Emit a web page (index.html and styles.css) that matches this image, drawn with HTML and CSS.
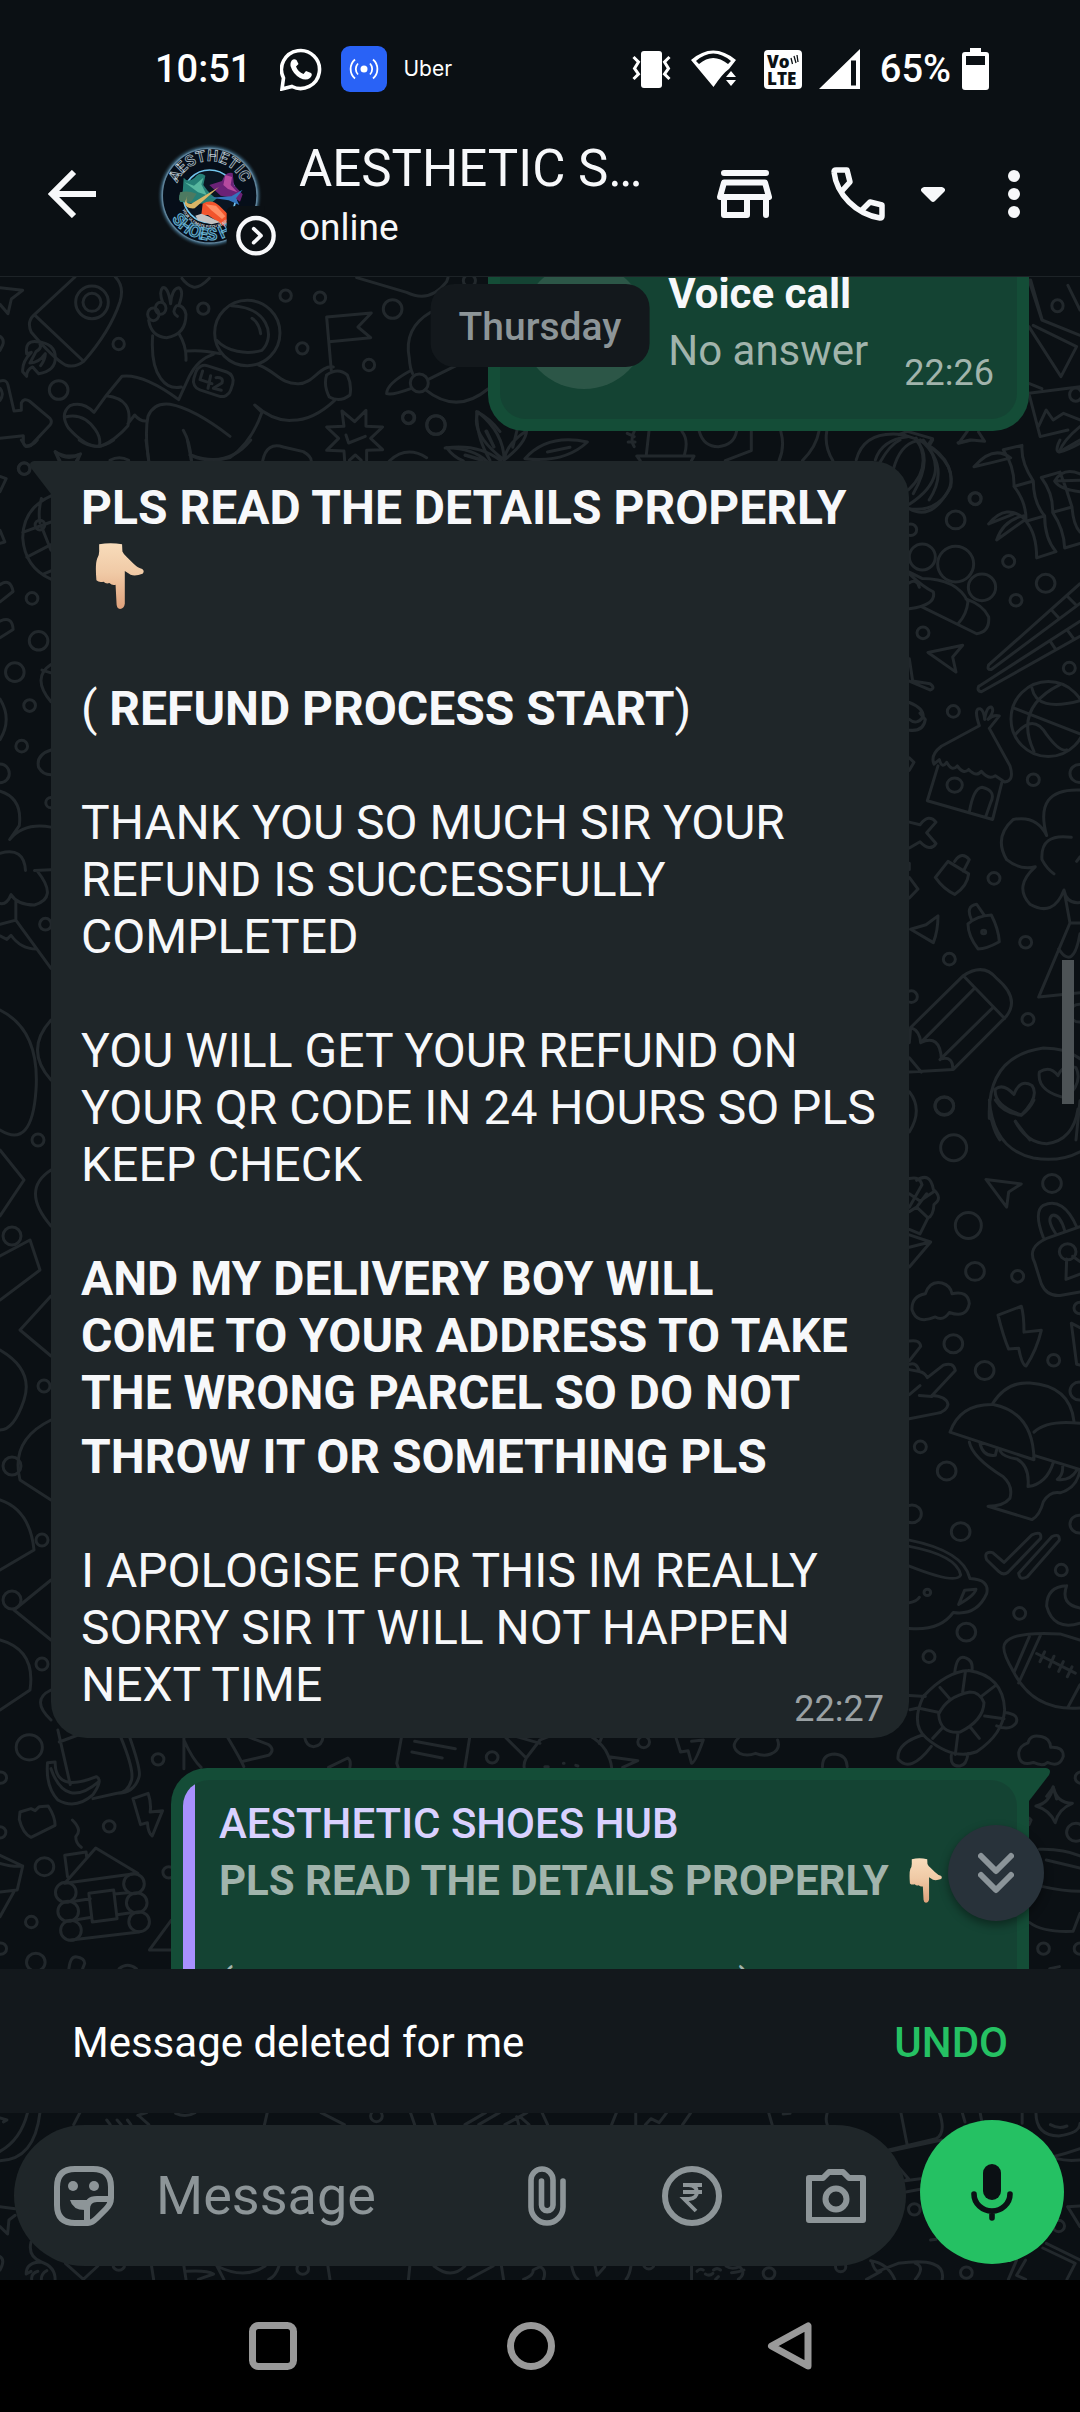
FILE: index.html
```html
<!DOCTYPE html>
<html lang="en">
<head>
<meta charset="utf-8">
<meta name="viewport" content="width=device-width, initial-scale=1">
<title>AESTHETIC SHOES HUB</title>
<link rel="stylesheet" href="styles.css">
</head>
<body>
<svg class="defs" aria-hidden="true">
  <defs>
    <linearGradient id="skin" x1="0" y1="0" x2="0" y2="1">
      <stop offset="0" stop-color="#f8dcbb"/><stop offset=".45" stop-color="#f0caa6"/><stop offset="1" stop-color="#dfa17b"/>
    </linearGradient>
    <symbol id="point-down" viewBox="0 0 143 193">
      <path fill="url(#skin)" d="M12 4Q45-3 79 4L80 25Q84 34 92 40L112 60Q126 74 138 76Q146 82 139 90Q118 98 104 93L87 82V178Q85 193 73 193Q64 192 63 180L60 122Q50 125 42 117Q32 121 25 113Q12 117 4 109Q0 62 6 46Q13 36 12 20Z"/>
    </symbol>
  </defs>
</svg>

<div class="statusbar">
  <div class="status-left">
    <span class="clock">10:51</span>
    <svg class="s-wa" width="42" height="43" viewBox="0 0 42 43" aria-hidden="true"><path d="M3.500 30A19 19 0 1 1 12 38.500L2 41Z" fill="none" stroke="#fff" stroke-width="3.600"/><path fill="#fff" d="M13 11.500Q10 13 10.500 18Q13 26 20 30Q26 33 30 30Q33 27 31 25L26 23L23.500 26Q18 24 16 18.500L18.500 16L16.500 12Q15 11 13 11.500Z"/></svg>
    <svg class="s-hot" width="46" height="46" viewBox="0 0 46 46" aria-hidden="true"><rect width="46" height="46" rx="9" fill="#2962f6"/><circle cx="23" cy="23" r="3.500" fill="#fff"/><g fill="none" stroke="#fff" stroke-width="1.800"><path d="M17 17.500A8 8 0 0 0 17 28.500M29 17.500A8 8 0 0 1 29 28.500M14 13.500A12.500 12.500 0 0 0 14 32.500M32 13.500A12.500 12.500 0 0 1 32 32.500"/></g></svg>
    <span class="uber">Uber</span>
  </div>
  <div class="status-right">
    <svg width="39" height="38" viewBox="0 0 39 38" aria-hidden="true"><rect x="9" y="1" width="21" height="37" rx="3" fill="#fff"/><path d="M1.500 7l5 5-4 6.500 4 5.500-5 5M37.500 7l-5 5 4 6.500-4 5.500 5 5" fill="none" stroke="#fff" stroke-width="3"/></svg>
    <svg class="s-wifi" width="46" height="40" viewBox="0 0 46 40" aria-hidden="true"><path fill="#fff" fill-rule="evenodd" d="M0 11Q22-8 45 11L38 20Q32 24 22.500 38ZM5 12L8 15Q22 3 37 15L40 12Q22-3 5 12Z"/><path fill="#fff" d="M35 28l5-6 5 6zM35 31h10l-5 6z"/></svg>
    <svg class="s-volte" width="38" height="39" viewBox="0 0 38 39" aria-hidden="true"><rect width="38" height="39" rx="4" fill="#fff"/><text x="3" y="18" class="volte">Vo</text><text x="3" y="35" class="volte">LTE</text><path d="M27 8l1.500 6M30 6l2 7M33 5l1 7" stroke="#0b1014" stroke-width="1.300"/></svg>
    <svg class="s-sig" width="41" height="40" viewBox="0 0 41 40" aria-hidden="true"><path fill="#fff" fill-rule="evenodd" d="M0 40L41 0V40ZM32 11.500V36.500H37V11.500Z"/></svg>
    <span class="battery-text">65%</span>
    <svg width="27" height="42" viewBox="0 0 27 42" aria-hidden="true"><path fill="#fff" fill-rule="evenodd" d="M8 0H19V4H24Q27 4 27 7V39Q27 42 24 42H3Q0 42 0 39V7Q0 4 3 4H8ZM4 8V17H23V8Z"/></svg>
  </div>
</div>

<header class="appbar">
  <button class="icon-btn back" aria-label="Back"><svg width="48" height="48" viewBox="0 0 48 48"><path d="M26 2L4 24l22 22M4 24h44" fill="none" stroke="#f7f8fa" stroke-width="6"/></svg></button>
  <svg class="avatar" width="130" height="130" viewBox="0 0 390 390" role="img" aria-label="Profile photo">
    <defs>
      <radialGradient id="glow"><stop offset=".84" stop-color="#7fb6d6"/><stop offset=".92" stop-color="#34566b"/><stop offset="1" stop-color="#0b1014" stop-opacity="0"/></radialGradient>
      <path id="arc-top" d="M81 182A104 104 0 0 1 289 182"/>
      <path id="arc-mid" d="M96 190A89 89 0 0 0 274 190"/>
      <path id="arc-bottom" d="M52 182A133 133 0 0 0 318 182"/>
    </defs>
    <circle cx="185" cy="182" r="158" fill="url(#glow)"/>
    <circle cx="185" cy="182" r="142" fill="#060e19" stroke="#5f8299" stroke-width="4"/>
    <circle cx="185" cy="184" r="79" fill="#0a1522" stroke="#73c6ee" stroke-width="5"/>
    <path fill="#257f76" d="M107 128Q120 145 140 128Q155 108 172 122L166 150Q190 185 207 190L190 204Q140 210 96 200Q88 178 104 172Z"/>
    <path fill="#57b79f" d="M110 142L138 152L166 128L160 148L176 180L150 172Z"/>
    <path fill="#4d7a61" d="M96 172Q120 166 146 176L130 200Q100 202 93 194Z"/>
    <path fill="#6b2277" d="M184 150L222 138Q232 108 254 114L258 150L284 178L276 200L262 190L218 182Z"/>
    <path fill="#b54a9f" d="M232 120L252 126L248 150L268 172L240 162L226 150Z"/>
    <path fill="#3474bd" d="M186 188L250 184L284 164L264 190L274 210L242 196L216 192Z"/>
    <path fill="#d9b566" d="M118 182Q108 208 130 206L213 156L140 220Q112 222 110 204Z"/>
    <path fill="#f2542c" d="M164 206Q190 190 214 212L246 244L260 268L232 276L180 240L160 240Z"/>
    <path fill="#ff8d64" d="M172 208L204 212L232 244L222 252L190 226Z"/>
    <path fill="#c4c2c1" d="M142 242L160 236L180 244L216 262L190 268L150 256Z"/>
    <text class="ring-top"><textPath href="#arc-top" startOffset="50%">AESTHETIC</textPath></text>
    <text class="ring-mid"><textPath href="#arc-mid" startOffset="50%">YOUR ULTIMATE PITCH READY SHOES</textPath></text>
    <text class="ring-bottom"><textPath href="#arc-bottom" startOffset="50%">SHOES HUB</textPath></text>
    <path fill="#0b1014" d="M236 232Q236 213 262 213H350V350H236Z"/>
    <circle cx="324" cy="302" r="53" fill="#0b1014" stroke="#f7f8fa" stroke-width="13"/>
    <path d="M317 281l22 21-22 21" fill="none" stroke="#f7f8fa" stroke-width="11" stroke-linecap="round" stroke-linejoin="round"/>
  </svg>
  <div class="contact">
    <h1 class="contact-name">AESTHETIC SHOES HUB</h1>
    <p class="contact-state">online</p>
  </div>
  <div class="actions">
    <button class="icon-btn" aria-label="Catalogue"><svg width="55" height="48" viewBox="0 0 55 48"><g fill="none" stroke="#f7f8fa" stroke-width="6" stroke-linecap="round" stroke-linejoin="round"><path d="M7 3H49M7 12.500H48L52 27H3ZM7 27V45H30V27M49 27V45"/></g></svg></button>
    <button class="icon-btn call" aria-label="Voice call"><svg width="54" height="54" viewBox="0 0 54 54"><path d="M3 5Q3 3 5 3H16L19 15L10 25M3 5Q5 22 18 35T49 51Q51 51 51 49V38L39 35L31 43" fill="none" stroke="#f7f8fa" stroke-width="5.500" stroke-linejoin="round"/></svg></button>
    <button class="icon-btn caret" aria-label="Call options"><svg width="24" height="15" viewBox="0 0 24 15"><path fill="#f7f8fa" d="M3 0H21Q26 2 23 5L14 14Q12 16 10 14L1 5Q-2 2 3 0Z"/></svg></button>
    <button class="icon-btn more" aria-label="More options"><svg width="12" height="48" viewBox="0 0 12 48"><g fill="#f7f8fa"><circle cx="6" cy="6" r="6"/><circle cx="6" cy="24" r="6"/><circle cx="6" cy="42" r="6"/></g></svg></button>
  </div>
</header>

<main class="stage">
  <svg class="wallpaper" viewBox="0 277 1080 2003" preserveAspectRatio="xMidYMin slice" aria-hidden="true">
    <!-- rocket, astronaut, flag and planet along the top -->
    <g transform="translate(0 275) scale(.3333)">
      <path d="M0 38L68 46L34 72L24 116L0 88M225 6L100 122Q80 142 94 172Q160 250 196 270Q224 280 250 260Q330 170 360 80Q374 34 346 6M106 122L250 258"/>
      <circle cx="276" cy="82" r="49"/><circle cx="276" cy="82" r="27"/>
      <path d="M110 200Q74 196 80 236L94 232Q66 260 68 290L80 304Q80 284 98 276L116 296Q166 288 166 248Q166 204 110 200M120 208Q126 220 108 230L90 264Q116 264 136 236Q136 252 122 272M0 184Q14 194 8 210L0 226"/>
      <path d="M0 318Q20 312 24 330L42 408L64 406V384Q72 368 88 378L150 430Q158 440 150 450L92 512Q74 520 70 504V482L0 490M0 340Q14 356 0 376"/>
      <path d="M546 10Q560 30 580 36Q600 40 628 10M488 82Q476 50 488 38Q504 34 512 86Q516 40 536 38Q554 46 536 92M528 94Q514 112 532 124M446 136Q454 186 500 188Q558 180 558 118Q552 90 530 92"/>
      <ellipse cx="460" cy="118" rx="17" ry="19"/><ellipse cx="482" cy="100" rx="16" ry="18"/>
      <path d="M458 182Q452 270 482 310Q506 344 544 336M538 178Q560 214 558 256M562 228Q606 224 660 236M640 238Q594 252 568 304L536 374Q430 296 366 304L320 360L282 412Q248 378 210 392Q178 418 206 460Q260 520 302 514Q348 494 384 452Q402 372 320 362M196 426Q250 412 286 464Q304 490 298 514M384 446L404 420Q420 440 440 438M446 558Q434 470 444 424Q462 382 510 388Q580 400 690 484M550 466Q570 500 574 556M570 540Q620 566 690 548Q756 500 786 412L764 390Q820 440 876 436Q940 436 1004 376M776 270C830 290 840 328 896 326C940 326 960 270 1000 276"/>
      <circle cx="742" cy="174" r="98"/><path d="M694 92C800 96 830 180 786 226C740 240 680 230 650 196M756 130Q778 144 782 176"/>
      <rect x="582" y="280" width="116" height="76" rx="28" transform="rotate(18 640 318)"/><path d="M608 288L600 314L636 326M632 302L624 340M648 308Q672 306 666 324L640 340L664 346"/>
      <path d="M994 286L980 126L1114 114L1074 156L1112 188L988 200M980 300Q1014 276 1042 300Q1056 330 1050 360Q1020 384 988 366Q970 330 980 300M1070 8L1220 52Q1290 86 1340 20L1344 8"/>
      <path d="M1292 112Q1210 160 1228 250Q1230 280 1238 296M1230 288Q1160 326 1160 356Q1176 362 1234 340M1276 344Q1370 420 1464 342M1284 314L1400 256"/><circle cx="1258" cy="324" r="27"/>
      <path d="M1026 408L1064 440L1098 406V454L1148 456L1112 490L1148 524L1100 526V556M1034 556L1032 528L980 526L1016 490L980 456L1032 454L1026 408M1038 480L1046 504L1096 484M1048 556L1066 540L1084 556"/>
      <path d="M1430 410C1430 480 1450 520 1470 556M1430 410Q1470 430 1500 470M1340 518Q1420 520 1460 558M1340 518Q1360 546 1390 558M1460 468L1482 516M1396 540L1446 554M1168 558Q1220 510 1280 548M788 558Q800 500 850 516L910 530Q934 544 934 558M166 530Q200 560 240 538L232 560M166 530L178 560M330 556Q358 540 386 556"/>
      <circle cx="356" cy="207" r="17"/><circle cx="610" cy="101" r="17"/><circle cx="857" cy="62" r="17"/><circle cx="960" cy="68" r="17"/><circle cx="1178" cy="102" r="28"/><circle cx="907" cy="220" r="17"/><circle cx="1107" cy="270" r="17"/><circle cx="176" cy="345" r="28"/><circle cx="1225" cy="428" r="17"/><circle cx="1308" cy="450" r="28"/><circle cx="73" cy="581" r="17"/>
    </g>
    <!-- leaves, cactus and pumpkin under the call bubble -->
    <g transform="translate(400 260) scale(.4337 .3333)">
      <path d="M240 600Q160 520 180 456Q240 520 240 600Q246 550 292 512M240 600Q290 550 292 512M104 564Q180 550 232 602M288 596Q340 520 432 546Q380 610 288 596M340 576L392 562M198 514L216 560M260 562L270 510M150 586L190 602M546 588H678L672 602M546 588L554 602M568 584L574 514M656 584Q666 540 650 514M540 514Q530 540 540 560M524 520L540 530M526 546L542 546M690 514Q700 560 734 560Q770 556 776 514M810 514V572L750 602M878 514Q888 560 874 602M966 514Q960 560 928 602M984 514Q978 560 998 602M1052 600Q1070 510 1160 524Q1280 570 1270 680Q1240 760 1172 746M1096 600Q1110 540 1170 530M1150 524L1170 514L1228 536L1220 550M1190 534Q1230 620 1172 690M1200 540Q1270 620 1220 720M1308 514L1288 550L1318 540L1348 544L1334 516"/>
      <path d="M1450 60L1480 180L1568 226M1454 60L1480 176M1450 200L1524 350L1560 260L1460 196M1450 370L1480 386M1450 400L1568 380M1450 400L1476 530L1540 510M1472 500L1490 450L1506 480L1530 460L1568 480M1540 76L1568 150M1568 500Q1530 540 1520 576Q1540 570 1568 550"/>
      <ellipse cx="20" cy="473" rx="14" ry="18"/><ellipse cx="83" cy="495" rx="21" ry="28"/><ellipse cx="1516" cy="137" rx="13" ry="18"/><ellipse cx="1558" cy="404" rx="14" ry="20"/><ellipse cx="1327" cy="716" rx="13" ry="18"/><ellipse cx="160" cy="62" rx="14" ry="18"/>
    </g>
    <!-- narrow strip left of the long message -->
    <g transform="translate(0 440) scale(.3444)">
      <path d="M62 0L74 18Q96 16 108 0M160 34Q196 56 234 40L222 60M160 34L174 60M424 0L432 60M544 0Q552 40 556 60M230 0Q280 36 330 0M556 44Q660 84 728 0M0 106L18 112L0 150M0 262L14 296L0 300M148 162Q66 200 66 284Q72 370 148 404M120 170Q110 210 116 240M66 268L148 238M78 340L148 304M120 250L148 320M124 390L148 380M0 420Q30 400 38 440L0 470M0 526Q36 510 38 550L0 574M148 652Q90 690 148 760M122 668L148 676M0 752Q36 810 0 870M148 900Q104 914 112 950Q124 972 148 972M0 1020Q66 1040 56 1120L28 1160Q70 1110 148 1124M0 1200Q70 1180 74 1250M100 1250L148 1248M110 1254Q170 1330 100 1350Q50 1350 32 1320Q20 1350 0 1346M46 1340V1394L148 1534M0 1406L46 1394M0 1440L20 1450L32 1438Q60 1478 106 1478"/>
      <circle cx="70" cy="83" r="17"/><circle cx="116" cy="247" r="14"/><circle cx="93" cy="460" r="17"/><circle cx="112" cy="583" r="27"/><circle cx="43" cy="674" r="27"/><circle cx="86" cy="771" r="17"/><circle cx="63" cy="889" r="17"/><circle cx="0" cy="968" r="27"/><circle cx="132" cy="1406" r="17"/><circle cx="148" cy="1053" r="15"/>
    </g>
    <path d="M0 1010Q40 1030 36 1090T0 1130M51 1020Q24 1050 51 1080M0 1150L24 1180L0 1216M51 1170Q20 1190 51 1226M0 1256L30 1240L40 1270L0 1300M51 1296L20 1330L51 1356M0 1350Q34 1370 24 1400T0 1430M51 1420Q10 1440 20 1480L51 1500M0 1500Q30 1510 34 1550L0 1570M51 1580L14 1610L51 1640M0 1640Q36 1650 30 1690L0 1710M51 1690Q30 1700 51 1720"/>
    <circle cx="38" cy="1140" r="6"/><circle cx="12" cy="1236" r="9"/><circle cx="44" cy="1386" r="6"/><circle cx="12" cy="1466" r="9"/><circle cx="42" cy="1540" r="6"/><circle cx="12" cy="1600" r="9"/><circle cx="42" cy="1664" r="6"/>
    <!-- bamboo, chopsticks, hut, ball, tree, pencil -->
    <g transform="translate(880 440) scale(.3333 .4464)">
      <path d="M0 50Q30 10 60 0M40 66Q60 10 110 2Q160 40 100 120M120 0Q250 60 200 120T88 154M130 0Q220 80 88 144M150 10L158 0M234 6L270 0M370 22L426 12Q422 50 460 92Q460 140 494 170Q494 220 528 250L470 264Q470 210 438 182Q440 140 402 104Q404 60 370 22M402 104L460 92M438 182L494 170M282 60Q340 10 392 40Q340 50 282 60M326 188Q380 140 436 178L350 224Q370 180 430 170M326 188L400 166M484 84L540 72M484 84Q520 120 518 162Q552 200 554 242L600 232M518 162L576 150Q580 190 600 206M540 72Q560 110 576 150M600 116Q540 110 524 92Q550 60 600 76M524 92L600 90M600 0L540 26Q526 28 534 10L540 0"/>
      <path d="M88 300Q130 330 160 340Q170 370 88 378M88 296L126 310Q230 310 264 362Q260 390 236 410M126 374L290 434Q330 430 326 396Q310 370 258 356M88 320Q110 310 118 330M144 476L248 460L218 486L228 520ZM326 504L600 322M334 514L600 366M326 504Q320 516 334 514M296 552L600 406M304 564L600 440M296 552Q290 562 304 564M516 382L538 400M562 350L586 368M510 450L528 470M562 426L582 446M88 490L98 540L150 546Q168 556 150 560L88 540M88 588Q130 600 130 620Q110 640 88 626M88 650Q130 654 136 626L120 612M88 712L102 722L88 740"/>
      <ellipse cx="505" cy="625" rx="112" ry="84"/><path d="M400 600L600 658M456 556Q470 610 600 584M406 660Q460 610 500 660Q540 700 560 694M540 548Q400 600 462 698"/>
      <path d="M298 640L184 686Q150 706 162 726L178 716Q186 738 200 722Q216 744 232 730Q250 750 266 738Q290 756 304 742Q326 762 346 752L374 766Q404 764 390 730L328 646M298 640Q280 600 300 602Q312 606 314 626Q320 596 334 598Q346 606 324 626Q340 614 358 618L328 646M174 730L142 808L338 850L366 766M268 834Q280 780 306 778Q350 786 332 812L318 842"/><ellipse cx="224" cy="773" rx="23" ry="16"/>
      <path d="M88 856L120 862Q146 836 168 856L140 880L168 904Q150 924 120 900L88 914M166 980L204 944L266 972Q262 1000 224 1018Q190 1006 166 980M224 944Q246 920 268 940L250 966M88 948L88 962M88 980L114 1006L88 1026M92 1096L138 1086L174 1066Q174 1100 160 1126L92 1096M264 1084Q290 1066 334 1064Q356 1096 358 1124Q320 1140 294 1140Q264 1110 264 1084M274 1074Q256 1044 290 1040L312 1064M500 886Q460 780 600 784M500 886Q470 840 400 850Q340 890 380 940Q420 964 466 956Q400 1000 450 1040Q520 1070 552 1008Q560 1040 600 1036M574 890Q480 880 486 940Q500 960 522 972M590 944L600 934M552 1008L570 1082L476 1248L600 1238M570 1082H600M536 1140Q580 1190 600 1106"/>
      <path d="M92 1316L250 1200Q310 1170 350 1206Q420 1250 380 1290L220 1410L88 1416M88 1384L124 1416M92 1316L88 1350M92 1316Q120 1324 122 1350Q180 1330 184 1386Q220 1380 218 1410M250 1200L374 1296M122 1350L284 1228M180 1388L338 1272M88 1460Q130 1500 88 1550M328 1520Q320 1380 490 1362Q560 1362 600 1386M328 1500Q340 1550 360 1568M424 1512Q340 1490 346 1454Q370 1440 402 1466Q420 1430 456 1446Q480 1470 424 1512M558 1474Q470 1460 478 1416Q510 1400 534 1424Q550 1396 588 1406Q610 1440 558 1474M406 1526Q440 1560 450 1568M600 1480L588 1568"/>
      <g><ellipse cx="285" cy="131" rx="18" ry="13"/><ellipse cx="227" cy="179" rx="28" ry="20"/><ellipse cx="92" cy="201" rx="18" ry="13"/><ellipse cx="127" cy="262" rx="39" ry="29"/><ellipse cx="227" cy="278" rx="54" ry="40"/><ellipse cx="306" cy="330" rx="41" ry="30"/><ellipse cx="386" cy="272" rx="18" ry="13"/><ellipse cx="497" cy="321" rx="28" ry="20"/><ellipse cx="408" cy="359" rx="18" ry="13"/><ellipse cx="129" cy="432" rx="18" ry="13"/><ellipse cx="568" cy="511" rx="18" ry="13"/><ellipse cx="220" cy="608" rx="18" ry="13"/><ellipse cx="460" cy="761" rx="18" ry="13"/><ellipse cx="598" cy="747" rx="28" ry="20"/><ellipse cx="342" cy="982" rx="18" ry="13"/><ellipse cx="311" cy="1102" rx="6" ry="4"/><ellipse cx="437" cy="1125" rx="18" ry="13"/><ellipse cx="208" cy="1163" rx="18" ry="13"/><ellipse cx="94" cy="1247" rx="18" ry="13"/><ellipse cx="444" cy="1298" rx="18" ry="13"/><ellipse cx="598" cy="1284" rx="28" ry="20"/><ellipse cx="193" cy="1491" rx="28" ry="20"/></g>
    </g>
    <!-- padlock, cupcakes, teacup, football, turtle -->
    <g transform="translate(880 1100) scale(.3333 .4464)">
      <path d="M328 0Q340 110 460 130Q540 140 600 116M406 48Q440 96 500 98Q580 90 594 20M346 0Q370 30 424 34Q450 20 462 0M88 176Q120 170 126 190M110 180Q150 160 160 200Q190 220 162 234Q160 260 144 264L120 300L88 290M126 190L88 240M160 206L120 226L88 210M88 250L110 240L144 264M110 240L140 210M88 302L152 318L88 374M88 330L150 318M318 178L424 188L386 206L380 240ZM490 308Q460 250 490 236Q550 216 590 284M526 298Q498 266 518 258Q540 256 554 292M600 284L500 310Q440 330 464 364L484 412Q500 440 540 438L600 430M560 356L558 402L600 390M578 350L600 362"/>
      <ellipse cx="563" cy="340" rx="25" ry="18"/>
      <path d="M136 434Q150 404 186 410Q212 416 216 434Q264 426 268 456Q260 490 208 476Q190 496 166 486Q110 504 96 470Q94 440 136 434M88 540Q120 536 122 552L88 584M88 592Q110 586 118 608Q134 610 142 622L190 594Q220 586 226 606L156 662Q200 664 204 682Q200 698 170 702L88 714M88 660L120 640M118 662L156 664M88 604L118 608M354 482L424 462Q432 480 432 520L484 516Q470 560 438 596Q426 594 416 556L386 558Q370 530 354 482M600 594L590 592L574 500L600 510M210 744Q240 680 340 682Q460 700 462 806ZM338 680Q380 630 450 634Q570 640 582 720M462 744Q500 716 600 724M462 796L600 828M268 766Q276 800 370 844Q400 864 390 892Q370 910 324 910L456 940Q480 930 490 900Q510 876 540 880Q590 870 600 830M360 786Q370 800 410 804Q450 820 444 866Q500 860 520 812M300 770Q310 800 346 796L350 784M548 820Q550 840 532 850Q570 854 590 830"/>
      <path d="M88 986Q250 1010 270 1072Q330 1074 320 1106Q290 1156 220 1148Q180 1190 88 1184M88 1000Q230 1020 242 1064Q230 1086 88 1044M254 1098L288 1096Q284 1110 236 1130ZM88 1126Q110 1124 118 1114M320 1030Q310 1010 338 1014L372 1036L456 974Q486 964 482 982L384 1058Q370 1066 356 1056ZM416 1060L516 978Q540 970 538 986L442 1068Q420 1078 416 1060M560 1088Q540 1130 600 1138M560 1088Q500 1090 500 1134Q520 1190 600 1172M376 1216Q400 1190 540 1196L600 1210M376 1216Q360 1230 400 1280Q460 1370 600 1362M448 1202L402 1282M482 1198L416 1306M600 1310L564 1360M470 1240L586 1284M494 1236L480 1258M522 1246L508 1270M550 1258L536 1280M576 1270L562 1292"/>
      <path d="M266 1278Q200 1280 130 1336Q90 1400 140 1430Q220 1480 290 1460Q370 1420 374 1366Q370 1290 266 1278M270 1326Q200 1336 176 1376Q180 1420 240 1416Q310 1390 312 1350Q300 1326 270 1326M180 1316L210 1342M256 1282L248 1326M346 1312L304 1336M372 1386L314 1380M298 1430L270 1404M226 1466L234 1418M158 1430L188 1406M114 1362L178 1372M224 1284Q230 1240 258 1250Q280 1256 276 1278M374 1372Q420 1376 408 1396Q390 1414 350 1402M130 1422Q50 1440 54 1476Q90 1510 154 1448M214 1468Q210 1494 240 1492Q260 1490 264 1464M114 1362L90 1366M136 1336L88 1334M444 1440Q450 1420 484 1426Q510 1430 512 1450Q550 1448 550 1470Q540 1496 502 1484Q490 1494 460 1484Q416 1494 416 1462Q420 1446 444 1440M500 1560L520 1540L530 1566"/>
      <g><ellipse cx="193" cy="14" rx="28" ry="20"/><ellipse cx="221" cy="107" rx="39" ry="29"/><ellipse cx="516" cy="187" rx="28" ry="20"/><ellipse cx="265" cy="281" rx="39" ry="29"/><ellipse cx="285" cy="384" rx="28" ry="20"/><ellipse cx="413" cy="395" rx="18" ry="13"/><ellipse cx="600" cy="466" rx="18" ry="13"/><ellipse cx="220" cy="546" rx="28" ry="20"/><ellipse cx="521" cy="583" rx="18" ry="13"/><ellipse cx="314" cy="606" rx="28" ry="20"/><ellipse cx="121" cy="777" rx="18" ry="13"/><ellipse cx="200" cy="831" rx="28" ry="20"/><ellipse cx="96" cy="927" rx="28" ry="20"/><ellipse cx="242" cy="967" rx="28" ry="20"/><ellipse cx="544" cy="1053" rx="18" ry="13"/><ellipse cx="142" cy="1103" rx="10" ry="7"/><ellipse cx="419" cy="1150" rx="18" ry="13"/><ellipse cx="259" cy="1192" rx="28" ry="20"/><ellipse cx="147" cy="1247" rx="18" ry="13"/><ellipse cx="598" cy="652" rx="28" ry="20"/><ellipse cx="598" cy="950" rx="28" ry="20"/></g>
    </g>
    <!-- banana, log cabin, camera, bolt -->
    <g transform="translate(0 1730) scale(.3444 .3333)">
      <path d="M168 0L204 164M172 36L250 6M350 20Q390 120 382 150Q370 190 340 190L270 206M376 20Q410 120 404 140Q390 190 340 190M138 98L160 96Q160 190 280 140Q300 150 270 194Q220 240 168 210Q132 170 138 98M148 116Q190 240 288 154M58 246L90 236L102 242L114 230L140 228Q160 260 160 286L90 322Q66 310 56 268ZM386 206L430 190Q440 220 436 246L472 242L442 318Q430 310 428 278L408 284ZM210 270Q240 300 220 320Q220 340 236 352M188 460L278 354L400 430L188 460M196 440L188 376L250 366L252 384M216 514L262 506M332 492L370 488M218 570L266 562M340 554L380 548M206 630L404 606M258 490L330 480L340 566L268 576ZM0 376L66 408L50 480L0 486M0 400Q40 412 66 408M40 486L0 560M498 570L434 660H498M200 716Q204 680 220 680Q246 684 246 700L240 716M346 716Q370 696 396 716M534 20V116M534 30Q560 90 584 112M660 20Q700 90 708 110M720 20L780 44Q800 60 780 76L706 94M954 112L1010 84Q1020 90 1016 112M884 20Q890 50 910 50Q936 48 938 20M1166 20L1152 100L1156 112M1364 20L1350 112M1204 34L1322 56M1196 66L1284 84M1466 20L1528 84L1568 30M1528 84Q1520 100 1522 112M1500 20L1568 40"/>
      <circle cx="85" cy="52" r="38"/><circle cx="459" cy="88" r="17"/><circle cx="2" cy="143" r="17"/><circle cx="317" cy="289" r="17"/><circle cx="0" cy="307" r="17"/><circle cx="129" cy="410" r="27"/><circle cx="490" cy="427" r="17"/><circle cx="91" cy="576" r="17"/><circle cx="2" cy="656" r="17"/><circle cx="104" cy="697" r="27"/><circle cx="191" cy="487" r="30"/><circle cx="198" cy="544" r="30"/><circle cx="206" cy="601" r="30"/><circle cx="389" cy="461" r="30"/><circle cx="397" cy="518" r="30"/><circle cx="404" cy="575" r="30"/><circle cx="1429" cy="82" r="17"/>
    </g>
    <g transform="translate(540 1730) scale(.3444 .3333)">
      <path d="M0 30Q130 -30 190 60Q206 90 208 112M180 20L172 40M200 80L284 92L240 112M394 20L408 66L430 62L440 100Q450 100 474 30L440 34M576 24Q550 50 580 70Q600 80 626 70Q650 80 670 72Q700 60 690 30M820 110Q820 72 856 72Q890 74 892 110M14 110H24M68 100H70M104 106L110 108M1440 228Q1480 220 1490 170Q1500 220 1546 220Q1506 236 1496 278Q1480 240 1440 228M1420 264L1426 270L1420 284M1450 358Q1520 356 1568 378M1470 390L1568 414M1460 470Q1520 484 1568 484M1422 578Q1460 608 1548 604L1568 550M1480 716L1508 710"/>
      <circle cx="301" cy="36" r="17"/><circle cx="1571" cy="143" r="17"/><circle cx="1556" cy="307" r="27"/><circle cx="1462" cy="656" r="17"/><circle cx="1568" cy="656" r="17"/>
    </g>
    <!-- edges around the message box -->
    <g transform="translate(0 2090) scale(.3444 .3333)">
      <path d="M80 68Q60 150 0 184M116 68Q100 210 0 212M0 84L20 90L10 96M232 68L214 104M310 90L320 104M340 90L352 104M370 90L380 104M400 76L426 68M404 78L432 104M510 70Q540 84 566 68M776 68L768 104M932 68L1000 104M1192 68L1204 104M1254 68L1264 104M1350 104L1410 68M1390 104L1450 68M1466 104L1530 68M1500 80L1506 104M1510 80L1536 104M0 350L44 356M44 376L26 390L22 432L0 410M0 500Q16 510 0 540M90 456Q80 500 120 516Q76 516 76 552L90 544M120 516Q160 530 160 568M92 568Q90 550 110 544M120 568Q120 550 136 542M190 520L242 568L284 528M440 528L446 568M534 528L540 568M540 544Q600 540 620 552L576 568M630 528Q710 570 770 528M630 528L650 568M810 528Q800 560 780 568M952 528L958 568M1190 528L1186 568M1260 528Q1310 570 1350 528M1360 568L1432 528M1456 528L1462 568M1520 568Q1550 556 1548 540L1568 530"/>
      <circle cx="1093" cy="78" r="17"/><circle cx="345" cy="524" r="17"/><circle cx="879" cy="536" r="17"/>
    </g>
    <g transform="translate(540 2090) scale(.3444 .3333)">
      <path d="M6 68L22 104M222 68L208 104M278 68V104M306 104L322 86L346 98L368 68M438 68L414 104M664 68L674 104M706 72L726 70M834 68Q828 90 834 104M1048 68L1066 164M1160 68Q1180 130 1150 146L1012 180M1020 182L1166 150M1226 68L1234 96M1278 68L1282 90M1400 68V100M1440 68Q1440 136 1506 138Q1568 130 1568 100M1482 104Q1506 118 1530 108M1490 200Q1530 190 1568 176M1500 206Q1530 214 1568 210M1040 230L1070 266L1060 272L1104 266M1062 306L1104 298M1532 350L1568 348M1532 350L1568 410M1470 460L1568 510M1460 474L1554 520L1530 568M1384 510L1360 568M1410 510L1384 556L1410 568M1134 450L1150 448M0 530Q20 540 10 568M92 528Q98 560 110 568M264 528Q260 556 250 568M160 528L166 556L188 530M440 528V568M456 544Q464 534 474 540M504 540Q514 532 524 540M480 552Q492 560 502 550M510 568L518 560M540 528Q556 540 580 530Q600 550 576 568M556 548Q580 546 592 540M960 512Q1010 520 1030 568M964 516Q970 540 980 544L1040 520Q1180 500 1168 568M1090 520Q1120 530 1090 568M948 568L990 544"/>
      <circle cx="665" cy="550" r="17"/><circle cx="873" cy="530" r="15"/><circle cx="1087" cy="358" r="17"/><circle cx="1238" cy="548" r="17"/><circle cx="1506" cy="408" r="17"/><circle cx="316" cy="522" r="15"/>
    </g>
  </svg>

  <section class="chat" aria-label="Messages">
    <div class="date-chip">Thursday</div>
    <div class="thread">
      <article class="bubble out call-card">
        <div class="card-inner">
          <span class="call-disc"></span>
          <div class="call-text">
            <strong class="call-title">Voice call</strong>
            <span class="call-note">No answer</span>
          </div>
          <time class="stamp">22:26</time>
        </div>
      </article>

      <article class="bubble in">
        <svg class="tail tail-in" width="21" height="33" viewBox="0 0 21 33" aria-hidden="true"><path fill="#1f2629" d="M21 0H4Q-2 1 1 7L21 33Z"/></svg>
        <div class="text">
          <p><strong>PLS READ THE DETAILS PROPERLY</strong></p>
          <svg class="hand" width="49" height="66" role="img" aria-label="Pointing down"><use href="#point-down"/></svg>
          <p>( <strong>REFUND PROCESS START</strong>)</p>
          <p>THANK YOU SO MUCH SIR YOUR<br>REFUND IS SUCCESSFULLY<br>COMPLETED</p>
          <p>YOU WILL GET YOUR REFUND ON<br>YOUR QR CODE IN 24 HOURS SO PLS<br>KEEP CHECK</p>
          <p><strong>AND MY DELIVERY BOY WILL<br>COME TO YOUR ADDRESS TO TAKE<br>THE WRONG PARCEL SO DO NOT<span class="last-line">THROW IT OR SOMETHING PLS</span></strong></p>
          <p>I APOLOGISE FOR THIS IM REALLY<br>SORRY SIR IT WILL NOT HAPPEN<br>NEXT TIME</p>
        </div>
        <time class="stamp">22:27</time>
      </article>

      <article class="bubble out reply">
        <svg class="tail tail-out" width="21" height="33" viewBox="0 0 21 33" aria-hidden="true"><path fill="#144d37" d="M0 0H17Q23 1 20 7L0 33Z"/></svg>
        <blockquote class="quote">
          <cite class="quote-name">AESTHETIC SHOES HUB</cite>
          <p class="quote-text quote-first"><strong>PLS READ THE DETAILS PROPERLY</strong> <svg class="hand-small" width="33" height="45" role="img" aria-label="Pointing down"><use href="#point-down"/></svg></p>
          <p class="quote-text quote-next">( <strong>REFUND PROCESS START</strong>)</p>
        </blockquote>
      </article>
    </div>
    <span class="scroll-thumb"></span>
    <button class="to-bottom" aria-label="Scroll to latest"><svg width="36" height="42" viewBox="0 0 36 42"><path d="M3 4L18 19L33 4M3 23L18 38L33 23" fill="none" stroke="#8b9499" stroke-width="6" stroke-linecap="round" stroke-linejoin="round"/></svg></button>
  </section>

  <div class="snackbar" role="status">
    <span>Message deleted for me</span>
    <button class="undo">UNDO</button>
  </div>

  <form class="composer">
    <div class="field">
      <button type="button" class="icon-btn" aria-label="Stickers"><svg width="60" height="60" viewBox="0 0 60 60"><g fill="none" stroke="#8d9598" stroke-width="6" stroke-linejoin="round"><path d="M21 3H39Q57 3 57 21V32Q57 38 52 43L43 52Q38 57 34 57H21Q3 57 3 39V21Q3 3 21 3Z"/><path d="M56 33H43Q33 33 33 43V56"/></g><g fill="#8d9598"><circle cx="19" cy="20" r="5"/><circle cx="40" cy="20" r="5"/><path d="M16 34H40L33 44Q19 45 16 34Z"/></g></svg></button>
      <input class="entry" type="text" placeholder="Message" aria-label="Message">
      <button type="button" class="icon-btn" aria-label="Attach"><svg width="38" height="60" viewBox="0 0 38 60"><path d="M35 15V41A16 16 0 0 1 3 41V14A11 11 0 0 1 25 14V39A5.500 5.500 0 0 1 13.500 39V15" fill="none" stroke="#8d9598" stroke-width="5.600" stroke-linecap="round"/></svg></button>
      <button type="button" class="icon-btn pay" aria-label="Payment"><svg width="60" height="60" viewBox="0 0 60 60"><circle cx="30" cy="30" r="27" fill="none" stroke="#8d9598" stroke-width="6"/><path d="M21 19H40M21 26H40M21 19H27Q35 20 35 26T27 33H22L34 45" fill="none" stroke="#8d9598" stroke-width="3.800"/></svg></button>
      <button type="button" class="icon-btn camera" aria-label="Camera"><svg width="60" height="54" viewBox="0 0 60 54"><g fill="none" stroke="#8d9598" stroke-width="6" stroke-linejoin="round"><path d="M3 9H17L23 3H37L43 9H57V51H3Z"/><circle cx="30" cy="30" r="10.500"/></g></svg></button>
    </div>
    <button type="button" class="mic" aria-label="Record voice message"><svg width="42" height="57" viewBox="0 0 42 57"><rect x="12" y="0" width="18" height="36" rx="9" fill="#0b1014"/><path d="M3 30A18 17 0 0 0 39 30M21 48V54" fill="none" stroke="#0b1014" stroke-width="5.600" stroke-linecap="round"/></svg></button>
  </form>
</main>

<nav class="navbar" aria-label="System">
  <button class="icon-btn" aria-label="Recent apps"><svg width="48" height="48" viewBox="0 0 48 48"><rect x="3.500" y="3.500" width="41" height="41" rx="6" fill="none" stroke="#999" stroke-width="7"/></svg></button>
  <button class="icon-btn" aria-label="Home"><svg width="48" height="48" viewBox="0 0 48 48"><circle cx="24" cy="24" r="20.500" fill="none" stroke="#999" stroke-width="7"/></svg></button>
  <button class="icon-btn" aria-label="Back"><svg width="48" height="48" viewBox="0 0 48 48"><path d="M43 4V44L6.500 24Z" fill="none" stroke="#999" stroke-width="7" stroke-linejoin="round"/></svg></button>
</nav>
</body>
</html>
```
FILE: styles.css
```css
*, *::before, *::after { box-sizing: border-box; }

body {
  margin: 0;
  height: 100vh;
  display: flex;
  flex-direction: column;
  overflow: hidden;
  background: #0b1014;
  color: #f7f8fa;
  font-family: Roboto, "Noto Sans", sans-serif;
}

p, h1, blockquote { margin: 0; }
button { border: 0; padding: 0; background: none; font: inherit; color: inherit; cursor: pointer; }
svg { display: block; flex: none; }
.defs { position: absolute; width: 0; height: 0; }
.icon-btn { display: flex; flex: none; }

/* system status bar */
.statusbar {
  display: flex;
  justify-content: space-between;
  align-items: center;
  flex: none;
  height: 112px;
  padding: 26px 91px 0 155px;
  color: #fff;
}
.status-left, .status-right { display: flex; align-items: center; }
.clock, .battery-text { font-size: 38px; font-weight: 500; line-height: 48px; }
.s-wa { margin-left: 29px; }
.s-hot { margin-left: 19px; }
.uber { margin-left: 16px; font-family: Inter, sans-serif; font-size: 21px; line-height: 28px; }
.s-wifi { margin-left: 20px; }
.s-volte { margin-left: 27px; }
.s-sig { margin: 0 20px 0 17px; }
.battery-text { margin-right: 11px; }
.volte { font: 800 17px "Open Sans", sans-serif; fill: #0b1014; }

/* chat header */
.appbar {
  display: flex;
  align-items: center;
  flex: none;
  height: 165px;
  padding: 0 60px 0 48px;
  border-bottom: 1px solid #1d2327;
}
.avatar { margin: 12px 0 0 52px; }
.contact { flex: 1; min-width: 0; margin: 0 60px 0 21px; }
.contact-name {
  overflow: hidden;
  white-space: nowrap;
  text-overflow: ellipsis;
  font-size: 51px;
  font-weight: 400;
  line-height: 62px;
}
.contact-state { margin-top: 5px; font-size: 37px; line-height: 46px; }
.actions { display: flex; align-items: center; }
.call { margin-left: 59px; }
.caret { margin-left: 36px; }
.more { margin-left: 63px; }

.ring-top, .ring-mid, .ring-bottom { font-family: Roboto, sans-serif; font-weight: 700; text-anchor: middle; }
.ring-top { font-size: 47px; fill: #16222e; stroke: #b9c6cf; stroke-width: 2; }
.ring-mid { font-size: 12px; fill: #c9d3da; }
.ring-bottom { font-size: 50px; fill: #12303f; stroke: #69b3d4; stroke-width: 3; }

/* wallpaper stage */
.stage { position: relative; display: flex; flex-direction: column; flex: 1; min-height: 0; }
.wallpaper { position: absolute; inset: 0; width: 100%; height: 100%; fill: none; stroke: #22282c; stroke-width: 3; stroke-linecap: round; stroke-linejoin: round; }
.wallpaper * { vector-effect: non-scaling-stroke; }

.chat { position: relative; flex: 1; min-height: 0; overflow: hidden; }
.thread { display: flex; flex-direction: column; gap: 30px; margin-top: -47px; padding: 0 51px; }

.date-chip {
  position: absolute;
  z-index: 1;
  top: 7px;
  left: 50%;
  transform: translateX(-50%);
  padding: 18px 28px 14px;
  border-radius: 24px;
  background: #13181c;
  color: #8d9598;
  font-size: 39px;
  font-weight: 500;
  line-height: 51px;
}

.bubble { position: relative; border-radius: 36px; }
.bubble.out { padding: 12px; background: #144d37; }
.bubble.in { display: grid; margin-right: 120px; padding: 18px 25px 11px 30px; border-top-left-radius: 0; background: #1f2629; }
.stamp { font-size: 36px; line-height: 36px; color: #9aa1a4; }
.tail { position: absolute; top: 0; }
.tail-in { right: 100%; }
.tail-out { left: 100%; }

.card-inner { display: flex; padding: 21px 23px 28px 21px; border-radius: 26px; background: #144333; }
.call-card { align-self: flex-end; }
.call-disc { width: 126px; height: 126px; margin-bottom: 2px; border-radius: 50%; background: #2c5647; }
.call-text { display: flex; flex-direction: column; margin: 2px 36px 0 21px; font-size: 42px; line-height: 57px; }
.call-title { font-weight: 700; }
.call-note { color: #a1b4ac; }
.call-card .stamp { align-self: flex-end; color: #a1b4ac; }

.text, .bubble.in > .stamp { grid-area: 1 / 1; }
.bubble.in > .stamp { place-self: end; }
.text { padding-bottom: 14px; font-size: 48px; line-height: 57px; }
.text p + p { margin-top: 57px; }
.hand { margin: 7px 14px 0; }
.hand + p { margin-top: 71px; }
.last-line { display: block; margin-top: 7px; }

.reply { margin-left: 120px; border-top-right-radius: 0; }
.quote {
  padding: 15px 25px 15px 36px;
  border-radius: 26px;
  background: linear-gradient(90deg, #a791ff 12px, #144333 12px);
  font-size: 42px;
}
.quote-name { display: block; font-style: normal; font-weight: 500; line-height: 57px; color: #d9d1ff; }
.quote-text { line-height: 52px; color: #a1b4ac; }
.quote-first { display: flex; gap: 20px; margin-top: 3px; }
.hand-small { margin-top: 3px; }
.quote-next { margin-top: 52px; }

.scroll-thumb { position: absolute; top: 683px; right: 6px; width: 12px; height: 144px; background: #4d5356; }
.to-bottom {
  position: absolute;
  right: 36px;
  bottom: 48px;
  display: grid;
  place-items: center;
  width: 96px;
  height: 96px;
  border-radius: 50%;
  background: #28323a;
  box-shadow: 0 4px 10px rgba(0, 0, 0, .4);
}

.snackbar {
  position: relative;
  display: flex;
  justify-content: space-between;
  align-items: center;
  flex: none;
  height: 144px;
  padding: 2px 72px 0 72px;
  background: #13181c;
  color: #fff;
  font-size: 42px;
}
.undo { font-weight: 500; color: #25c163; }

.composer { position: relative; display: flex; gap: 14px; flex: none; padding: 7px 16px 14px 14px; }
.field {
  display: flex;
  align-items: center;
  flex: 1;
  min-width: 0;
  height: 141px;
  margin-top: 5px;
  padding: 0 40px;
  border-radius: 71px;
  background: #1f2629;
}
.entry {
  flex: 1;
  min-width: 0;
  margin-left: 42px;
  padding: 0;
  border: 0;
  outline: 0;
  background: none;
  color: #f7f8fa;
  font: 400 54px Roboto, "Noto Sans", sans-serif;
}
.entry::placeholder { color: #8d9598; opacity: 1; }
.pay { margin-left: 96px; }
.camera { margin-left: 84px; }
.mic { display: grid; place-items: center; flex: none; width: 144px; height: 144px; border-radius: 50%; background: #25c163; }

/* system navigation bar */
.navbar { display: flex; justify-content: center; align-items: center; gap: 210px; flex: none; height: 132px; padding-right: 18px; background: #000; }
```
